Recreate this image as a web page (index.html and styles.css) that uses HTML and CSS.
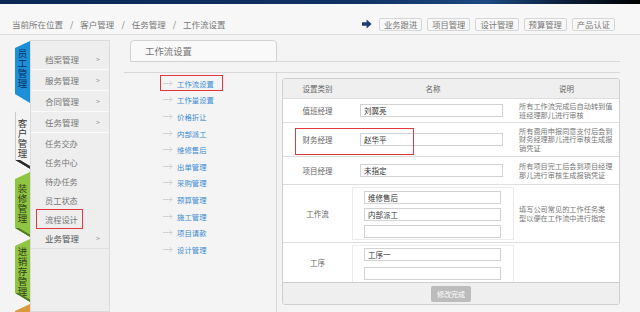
FILE: index.html
```html
<!DOCTYPE html>
<html lang="zh-CN">
<head>
  <meta charset="UTF-8" />
  <title>工作流设置</title>
  <link rel="stylesheet" href="styles.css">
</head>
<body>

<div class="topbar"></div>

<header class="header">
  <div class="crumbs">
    <span>当前所在位置</span><span class="sep">/</span><span>客户管理</span><span class="sep">/</span><span>任务管理</span><span class="sep">/</span><span>工作流设置</span>
  </div>
  <nav class="quick">
    <svg class="go" width="10" height="10" viewBox="0 0 10 10"><path d="M0 3.2H4.6V0.4L9.6 5L4.6 9.6V6.8H0Z" fill="#1c3d6e"/></svg>
    <a class="qbtn">业务跟进</a>
    <a class="qbtn">项目管理</a>
    <a class="qbtn">设计管理</a>
    <a class="qbtn">预算管理</a>
    <a class="qbtn">产品认证</a>
  </nav>
</header>

<div class="main">
  <div class="tabs">
    <div class="tab tab-blue"><span>员工管理</span></div>
    <div class="tab tab-gray"><span>客户管理</span></div>
    <div class="tab tab-green"><span>装修管理</span></div>
    <div class="tab tab-green tab-long"><span>进销存管理</span></div>
    <div class="tab tab-orange"></div>
  </div>

  <ul class="menu">
    <li class="menu-item">档案管理<span class="more">&gt;</span></li>
    <li class="menu-item">服务管理<span class="more">&gt;</span></li>
    <li class="menu-item">合同管理<span class="more">&gt;</span></li>
    <li class="menu-item">任务管理<span class="more">&gt;</span></li>
    <li class="menu-sub"><span>任务交办</span></li>
    <li class="menu-sub"><span>任务中心</span></li>
    <li class="menu-sub"><span>待办任务</span></li>
    <li class="menu-sub"><span>员工状态</span></li>
    <li class="menu-sub"><span class="current">流程设计</span></li>
    <li class="menu-item menu-last">业务管理<span class="more">&gt;</span></li>
  </ul>

  <div class="content">
    <div class="content-head">
      <div class="title-tab">工作流设置</div>
      <div class="head-line"></div>
    </div>

    <div class="content-body">
      <ul class="links">
        <li><span class="link active"><svg class="arr" width="10" height="7" viewBox="0 0 10 7"><path d="M0 3.5H9M6.5 1L9 3.5L6.5 6" fill="none" stroke="#c4c4c4" stroke-width="0.7"/></svg>工作流设置</span></li>
        <li><span class="link"><svg class="arr" width="10" height="7" viewBox="0 0 10 7"><path d="M0 3.5H9M6.5 1L9 3.5L6.5 6" fill="none" stroke="#c4c4c4" stroke-width="0.7"/></svg>工作量设置</span></li>
        <li><span class="link"><svg class="arr" width="10" height="7" viewBox="0 0 10 7"><path d="M0 3.5H9M6.5 1L9 3.5L6.5 6" fill="none" stroke="#c4c4c4" stroke-width="0.7"/></svg>价格折让</span></li>
        <li><span class="link"><svg class="arr" width="10" height="7" viewBox="0 0 10 7"><path d="M0 3.5H9M6.5 1L9 3.5L6.5 6" fill="none" stroke="#c4c4c4" stroke-width="0.7"/></svg>内部派工</span></li>
        <li><span class="link"><svg class="arr" width="10" height="7" viewBox="0 0 10 7"><path d="M0 3.5H9M6.5 1L9 3.5L6.5 6" fill="none" stroke="#c4c4c4" stroke-width="0.7"/></svg>维修售后</span></li>
        <li><span class="link"><svg class="arr" width="10" height="7" viewBox="0 0 10 7"><path d="M0 3.5H9M6.5 1L9 3.5L6.5 6" fill="none" stroke="#c4c4c4" stroke-width="0.7"/></svg>出单管理</span></li>
        <li><span class="link"><svg class="arr" width="10" height="7" viewBox="0 0 10 7"><path d="M0 3.5H9M6.5 1L9 3.5L6.5 6" fill="none" stroke="#c4c4c4" stroke-width="0.7"/></svg>采购管理</span></li>
        <li><span class="link"><svg class="arr" width="10" height="7" viewBox="0 0 10 7"><path d="M0 3.5H9M6.5 1L9 3.5L6.5 6" fill="none" stroke="#c4c4c4" stroke-width="0.7"/></svg>预算管理</span></li>
        <li><span class="link"><svg class="arr" width="10" height="7" viewBox="0 0 10 7"><path d="M0 3.5H9M6.5 1L9 3.5L6.5 6" fill="none" stroke="#c4c4c4" stroke-width="0.7"/></svg>施工管理</span></li>
        <li><span class="link"><svg class="arr" width="10" height="7" viewBox="0 0 10 7"><path d="M0 3.5H9M6.5 1L9 3.5L6.5 6" fill="none" stroke="#c4c4c4" stroke-width="0.7"/></svg>项目请款</span></li>
        <li><span class="link"><svg class="arr" width="10" height="7" viewBox="0 0 10 7"><path d="M0 3.5H9M6.5 1L9 3.5L6.5 6" fill="none" stroke="#c4c4c4" stroke-width="0.7"/></svg>设计管理</span></li>
      </ul>

      <div class="panel">
        <div class="row row-head">
          <div class="cat">设置类别</div>
          <div class="name-h">名称</div>
          <div class="desc-h">说明</div>
        </div>
        <div class="row r1">
          <div class="cat">值班经理</div>
          <div class="name"><input class="field" type="text" value="刘翼亮"></div>
          <div class="desc">所有工作流完成后自动转到值<br>班经理那儿进行审核</div>
        </div>
        <div class="row r2">
          <div class="cat">财务经理</div>
          <div class="name"><input class="field" type="text" value="赵华平"></div>
          <div class="desc">所有费用申报同意支付后会到<br>财务经理那儿进行审核生成报<br>销凭证</div>
        </div>
        <div class="row r3">
          <div class="cat">项目经理</div>
          <div class="name"><input class="field" type="text" value="未指定"></div>
          <div class="desc">所有项目完工后会到项目经理<br>那儿进行审核生成报销凭证</div>
        </div>
        <div class="row r4">
          <div class="cat">工作流</div>
          <div class="stack">
            <input class="field" type="text" value="维修售后">
            <input class="field" type="text" value="内部派工">
            <input class="field" type="text" value="">
          </div>
          <div class="desc">填写公司常见的工作任务类<br>型以便在工作流中进行指定</div>
        </div>
        <div class="row r5">
          <div class="cat">工序</div>
          <div class="stack stack-b">
            <input class="field" type="text" value="工序一">
            <input class="field" type="text" value="">
          </div>
          <div class="desc"></div>
        </div>
        <div class="panel-foot">
          <button class="save" type="button">修改完成</button>
        </div>
        <div class="mark"></div>
      </div>
    </div>
  </div>
</div>

</body>
</html>
```

FILE: styles.css
```css
body { margin: 0; width: 640px; height: 312px; overflow: hidden; background: #f4f4f4; font-family: "Noto Sans CJK SC", "Noto Sans", sans-serif; color: #666; }
ul { list-style: none; margin: 0; padding: 0; }

.topbar { height: 4px; background: linear-gradient(90deg, #0b2855 0%, #0f3163 55%, #1c4a80 76%, #0c1f3c 88%, #000 100%); }

.header { height: 31px; box-sizing: border-box; padding: 10px 25px 0 12px; display: flex; align-items: center; border-bottom: 1px solid #dcdcdc; background: #f7f7f7; }
.crumbs { font-size: 8.5px; color: #777; display: flex; align-items: center; }
.crumbs .sep { margin: 0 7px; }
.quick { margin-left: auto; display: flex; align-items: center; gap: 5px; }
.go { margin-right: 2px; }
.qbtn { height: 13px; box-sizing: border-box; padding: 0 4px; border: 1px solid #d6d6d6; border-radius: 2px; background: #f8f8f8; font-size: 8.3px; line-height: 11px; color: #777; }

.main { display: flex; height: 277px; box-sizing: border-box; padding-top: 5px; }

.tabs { width: 30px; box-sizing: border-box; padding-left: 15px; display: flex; flex-direction: column; }
.tab { position: relative; width: 15px; box-sizing: border-box; clip-path: polygon(0 7px, 100% 0, 100% 100%, 0 calc(100% - 9px)); }
.tab span { display: block; width: 10px; margin: 0 auto; font-size: 9.5px; line-height: 10px; text-align: center; word-break: break-all; }
.tab-blue { margin-top: 1px; height: 62px; padding-top: 7px; background: #1c8fd6; color: #0b3263; }
.tab-gray { margin-top: 2px; height: 64px; padding-top: 13px; background: #f3f3f3; color: #333; box-shadow: inset 1px 0 0 #c9c9c9; }
.tab-gray::after { content: ""; position: absolute; left: 0; bottom: 0; width: 100%; height: 9px; background: linear-gradient(to top right, transparent 48%, #2a2a2a 50%, #2a2a2a 64%, transparent 70%); }
.tab-green { margin-top: 3px; height: 65px; padding-top: 11px; background: #8fc543; color: #2c3b18; }
.tab-green::after { content: ""; position: absolute; left: 0; bottom: 0; width: 100%; height: 9px; background: linear-gradient(to top right, transparent 48%, #4e7a22 50%, #4e7a22 60%, transparent 66%); }
.tab-long { margin-top: 2px; height: 63px; padding-top: 7px; }
.tab-orange { margin-top: 2px; flex: 1; background: #d99a42; clip-path: polygon(0 7px, 100% 0, 100% 100%, 0 100%); }

.menu { width: 81px; box-sizing: border-box; border: 1px solid #dadada; background: #eeeeee; padding-top: 8px; }
.menu-item { height: 21px; box-sizing: border-box; display: flex; align-items: center; padding: 0 9px 0 14px; border-bottom: 1px solid #fafafa; font-size: 8.5px; color: #777; }
.menu-item .more { margin-left: auto; font-size: 7px; color: #999; }
.menu-last { border-bottom-color: #e0e0e0; color: #555; }
.menu-sub { height: 19px; display: flex; align-items: center; padding-left: 14px; font-size: 8.2px; color: #777; }
.menu-sub span { margin-left: -8px; padding: 3px 4px 3px 8px; }
.menu-sub .current { outline: 1.5px solid #e0383e; }

.content { flex: 1; padding: 0 20px 0 14px; display: flex; flex-direction: column; }
.content-head { height: 22px; display: flex; align-items: flex-end; }
.title-tab { margin-left: 6px; width: 147px; height: 22px; box-sizing: border-box; border: 1px solid #d2d2d2; border-radius: 4px 4px 0 0; background: #f9f9f9; padding-left: 14px; font-size: 9.4px; line-height: 20px; color: #777; }
.head-line { flex: 1; border-bottom: 1px solid #d9d9d9; }
.content-body { margin-top: 10px; flex: 1; display: flex; border-top: 1px solid #d9d9d9; }

.links { width: 153px; box-sizing: border-box; border-right: 1px solid #dadada; padding: 2px 0 0 37px; }
.links li { height: 16.6px; display: flex; align-items: center; }
.link { height: 14px; box-sizing: border-box; display: inline-flex; align-items: center; gap: 4px; padding: 0 8px 0 2px; font-size: 7.4px; color: #3a8bd2; }
.link.active { outline: 1.5px solid #e0383e; }

.panel { position: relative; align-self: flex-start; margin: 5px 0 0 5px; width: 336px; border: 1px solid #cfcfcf; border-radius: 3px; background: #fff; overflow: hidden; }
.row { display: grid; grid-template-columns: 69px 162px 1fr; align-items: center; box-sizing: border-box; border-bottom: 1px solid #dedede; font-size: 7.5px; color: #666; }
.row-head { height: 20px; background: #efefef; }
.name-h, .desc-h, .cat { text-align: center; }
.r1 { height: 24px; }
.r2 { height: 34px; }
.r3 { height: 28px; }
.r4 { height: 58px; }
.r5 { height: 40px; border-bottom-color: #cfcfcf; }
.name { padding-left: 8px; }
.field { display: block; width: 143px; height: 13px; box-sizing: border-box; margin: 0; padding: 0 3px; border: 1px solid #d2d2d2; font-family: inherit; font-size: 7.5px; color: #333; background: #fff; }
.stack { align-self: stretch; margin: 2px 0 2px; border: 1px solid #ececec; padding: 3px 12px 0 11px; display: flex; flex-direction: column; gap: 4px; }
.stack .field { width: 100%; }
.stack-b { margin-bottom: 0; border-bottom: none; padding-top: 2px; gap: 6px; }
.desc { padding-left: 5px; font-size: 7.2px; line-height: 8.6px; color: #777; }

.panel-foot { height: 21px; background: #efefef; display: flex; justify-content: center; align-items: center; }
.save { width: 40px; height: 16px; border: none; border-radius: 2px; background: #bcbcbc; color: #fff; font-family: inherit; font-size: 7px; padding: 0; }

.mark { position: absolute; left: 12px; top: 49px; width: 119px; height: 27px; box-sizing: border-box; border: 1.5px solid #e0393e; }
```
